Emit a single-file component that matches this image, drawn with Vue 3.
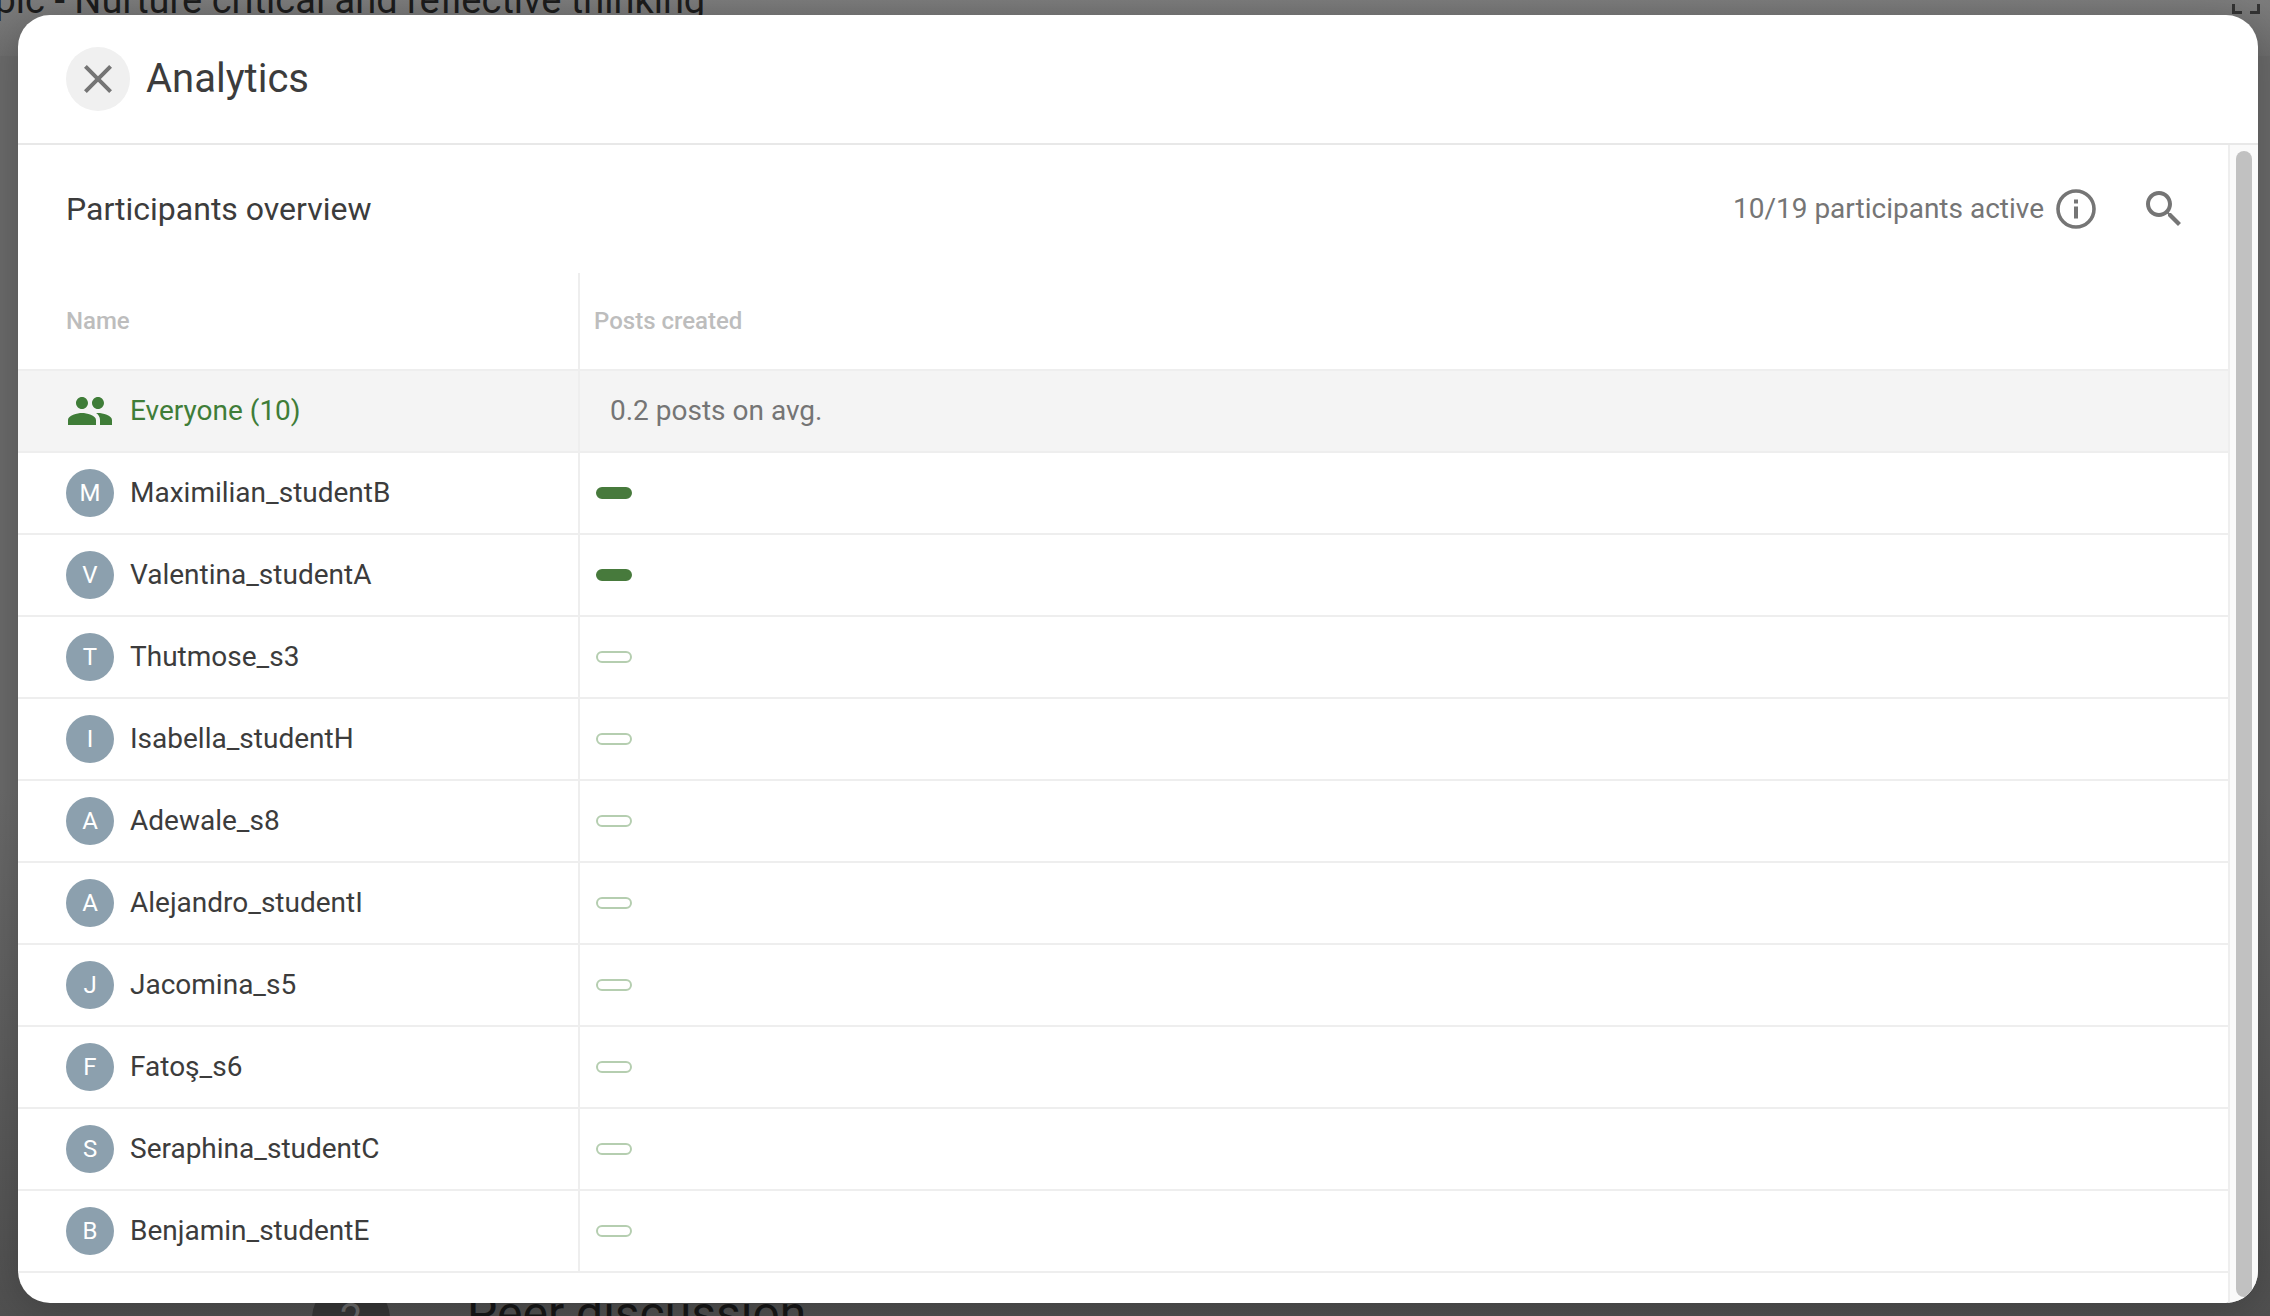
<script setup>
const people = [
  { name: 'Maximilian_studentB', filled: true },
  { name: 'Valentina_studentA', filled: true },
  { name: 'Thutmose_s3' },
  { name: 'Isabella_studentH' },
  { name: 'Adewale_s8' },
  { name: 'Alejandro_studentI' },
  { name: 'Jacomina_s5' },
  { name: 'Fatoş_s6' },
  { name: 'Seraphina_studentC' },
  { name: 'Benjamin_studentE' },
]
</script>

<template>
  <div class="page">
    <div class="backdrop">
      <div class="topbar"></div>
      <div class="behind-title">Topic - Nurture critical and reflective thinking</div>
      <svg class="corner-icon" width="28" height="10" viewBox="0 0 28 10">
        <path d="M0 0h3v7h7v3H0zM28 0h-3v7h-7v3h10z" fill="#333" />
      </svg>
      <div class="behind-step">2</div>
      <div class="behind-heading">Peer discussion</div>
    </div>

    <section class="modal">
      <header class="modal-head">
        <button class="close" type="button" aria-label="Close">
          <svg width="48" height="48" viewBox="0 0 24 24">
            <path d="M19 6.41 17.59 5 12 10.59 6.41 5 5 6.41 10.59 12 5 17.59 6.41 19 12 13.41 17.59 19 19 17.59 13.41 12z" fill="#757575" />
          </svg>
        </button>
        <h1 class="title">Analytics</h1>
      </header>

      <div class="scroller">
        <div class="content">
          <div class="overview">
            <h2 class="overview-title">Participants overview</h2>
            <div class="overview-meta">
              <span class="label">10/19 participants active</span>
              <svg class="info" width="40" height="40" viewBox="0 0 40 40">
                <circle cx="20" cy="20" r="18" fill="none" stroke="#757575" stroke-width="3.6" />
                <rect x="18" y="17.5" width="4" height="12" fill="#757575" />
                <rect x="18" y="10.5" width="4" height="4" fill="#757575" />
              </svg>
              <svg class="search" width="48" height="48" viewBox="0 0 24 24">
                <path d="M15.5 14h-.79l-.28-.27C15.41 12.59 16 11.11 16 9.5 16 5.91 13.09 3 9.5 3S3 5.91 3 9.5 5.91 16 9.5 16c1.61 0 3.09-.59 4.23-1.57l.27.28v.79l5 4.99L20.49 19l-4.99-5zm-6 0C7.01 14 5 11.99 5 9.5S7.01 5 9.5 5 14 7.01 14 9.5 11.99 14 9.5 14z" fill="#757575" />
              </svg>
            </div>
          </div>

          <div class="table">
            <div class="row head">
              <div class="cell-name">Name</div>
              <div class="cell-bar">Posts created</div>
            </div>
            <div class="row everyone">
              <div class="cell-name">
                <svg class="group" width="48" height="48" viewBox="0 0 24 24">
                  <path d="M16 11c1.66 0 2.99-1.34 2.99-3S17.66 5 16 5c-1.66 0-3 1.34-3 3s1.34 3 3 3zm-8 0c1.66 0 2.99-1.34 2.99-3S9.66 5 8 5C6.34 5 5 6.34 5 8s1.34 3 3 3zm0 2c-2.33 0-7 1.17-7 3.5V19h14v-2.5c0-2.33-4.67-3.5-7-3.5zm8 0c-.29 0-.62.02-.97.05 1.16.84 1.97 1.97 1.97 3.45V19h6v-2.5c0-2.33-4.67-3.5-7-3.5z" fill="#3f7d38" />
                </svg>
                <span class="label">Everyone (10)</span>
              </div>
              <div class="cell-bar avg"><span class="label">0.2 posts on avg.</span></div>
            </div>
            <div v-for="p in people" :key="p.name" class="row">
              <div class="cell-name">
                <span class="avatar">{{ p.name[0] }}</span>
                <span class="label">{{ p.name }}</span>
              </div>
              <div class="cell-bar person">
                <span class="bar" :class="{ filled: p.filled }"></span>
              </div>
            </div>
          </div>
        </div>
        <div class="track"><div class="thumb"></div></div>
      </div>
    </section>
  </div>
</template>

<style>
html, body { margin: 0; overflow: hidden; background: #666; }
</style>

<style scoped>
.page {
  position: relative;
  width: 2270px;
  height: 1316px;
  overflow: hidden;
  padding: 15px 0 0 18px;
  box-sizing: border-box;
  font-family: Roboto, "Liberation Sans", sans-serif;
}
.backdrop {
  position: absolute;
  inset: 0;
  background: linear-gradient(#6a6a6a, #6a6a6a 60%, #505050 100%);
}
.topbar {
  position: absolute;
  left: 0;
  right: 0;
  top: 0;
  height: 56px;
  background: linear-gradient(#7c7c7c, #6e6e6e);
}
.behind-title {
  position: absolute;
  left: -48px;
  top: -22px;
  font-size: 38px;
  line-height: 44px;
  color: #1c1c1c;
  white-space: nowrap;
}
.corner-icon {
  position: absolute;
  left: 2232px;
  top: 4px;
}
.behind-step {
  position: absolute;
  left: 312px;
  top: 1280px;
  width: 78px;
  height: 78px;
  border-radius: 50%;
  background: #363636;
  color: #6a6a6a;
  font-size: 40px;
  line-height: 78px;
  text-align: center;
}
.behind-heading {
  position: absolute;
  left: 467px;
  top: 1286px;
  font-size: 48px;
  line-height: 56px;
  color: #161616;
  white-space: nowrap;
}
.modal {
  position: relative;
  width: 2240px;
  height: 1288px;
  background: #fff;
  border-radius: 32px;
  overflow: hidden;
  display: flex;
  flex-direction: column;
}
.page::after {
  content: "";
  position: absolute;
  left: 18px;
  top: 15px;
  width: 2240px;
  height: 1288px;
  border-radius: 32px;
  box-shadow: 0 6px 40px rgba(0, 0, 0, 0.22);
  pointer-events: none;
}
.modal-head {
  flex: none;
  height: 128px;
  padding: 0 48px;
  display: flex;
  align-items: center;
  gap: 16px;
  border-bottom: 2px solid #e8e8e8;
}
.close {
  width: 64px;
  height: 64px;
  padding: 0;
  border: 0;
  border-radius: 50%;
  background: #f0f0f0;
  display: flex;
  align-items: center;
  justify-content: center;
}
.title {
  margin: 0 0 2px;
  font-size: 40px;
  font-weight: 400;
  color: #3c3c3c;
}
.scroller {
  flex: 1;
  min-height: 0;
  display: flex;
}
.content {
  width: 2210px;
  flex: none;
}
.overview {
  height: 128px;
  padding: 0 40px 0 48px;
  display: flex;
  align-items: center;
  justify-content: space-between;
}
.overview-title {
  margin: 0;
  font-size: 32px;
  font-weight: 400;
  color: #3c3c3c;
}
.overview-meta {
  display: flex;
  align-items: center;
  font-size: 28px;
  color: #757575;
}
.label { margin-bottom: 2px; }
.info { margin-left: 12px; margin-right: 1px; }
.search { margin-left: 43px; }
.row {
  display: flex;
  height: 82px;
  box-sizing: border-box;
  border-bottom: 2px solid #eeeeee;
  font-size: 28px;
  color: #3c3c3c;
}
.cell-name {
  width: 512px;
  flex: none;
  padding-left: 48px;
  display: flex;
  align-items: center;
  gap: 16px;
  border-right: 2px solid #eeeeee;
}
.cell-bar {
  flex: 1;
  padding-left: 14px;
  display: flex;
  align-items: center;
}
.head {
  height: 98px;
  font-size: 24px;
  font-weight: 500;
  color: #bdbdbd;
}
.everyone {
  background: #f4f4f4;
  color: #3f7d38;
}
.group { flex: none; }
.avg {
  color: #757575;
  padding-left: 30px;
}
.person { padding-left: 16px; }
.avatar {
  width: 48px;
  height: 48px;
  flex: none;
  border-radius: 50%;
  background: #8ca0ae;
  color: #fff;
  font-size: 24px;
  font-weight: 400;
  display: flex;
  align-items: center;
  justify-content: center;
}
.bar {
  width: 36px;
  height: 12px;
  box-sizing: border-box;
  border-radius: 6px;
  border: 2px solid #b5ceb0;
}
.bar.filled {
  background: #477a3c;
  border-color: #477a3c;
}
.track {
  flex: 1;
  background: #fafafa;
  border-left: 2px solid #eeeeee;
  padding: 6px 5px 6px 6px;
  display: flex;
}
.thumb {
  width: 16px;
  border-radius: 8px;
  background: #c1c1c1;
}
</style>
